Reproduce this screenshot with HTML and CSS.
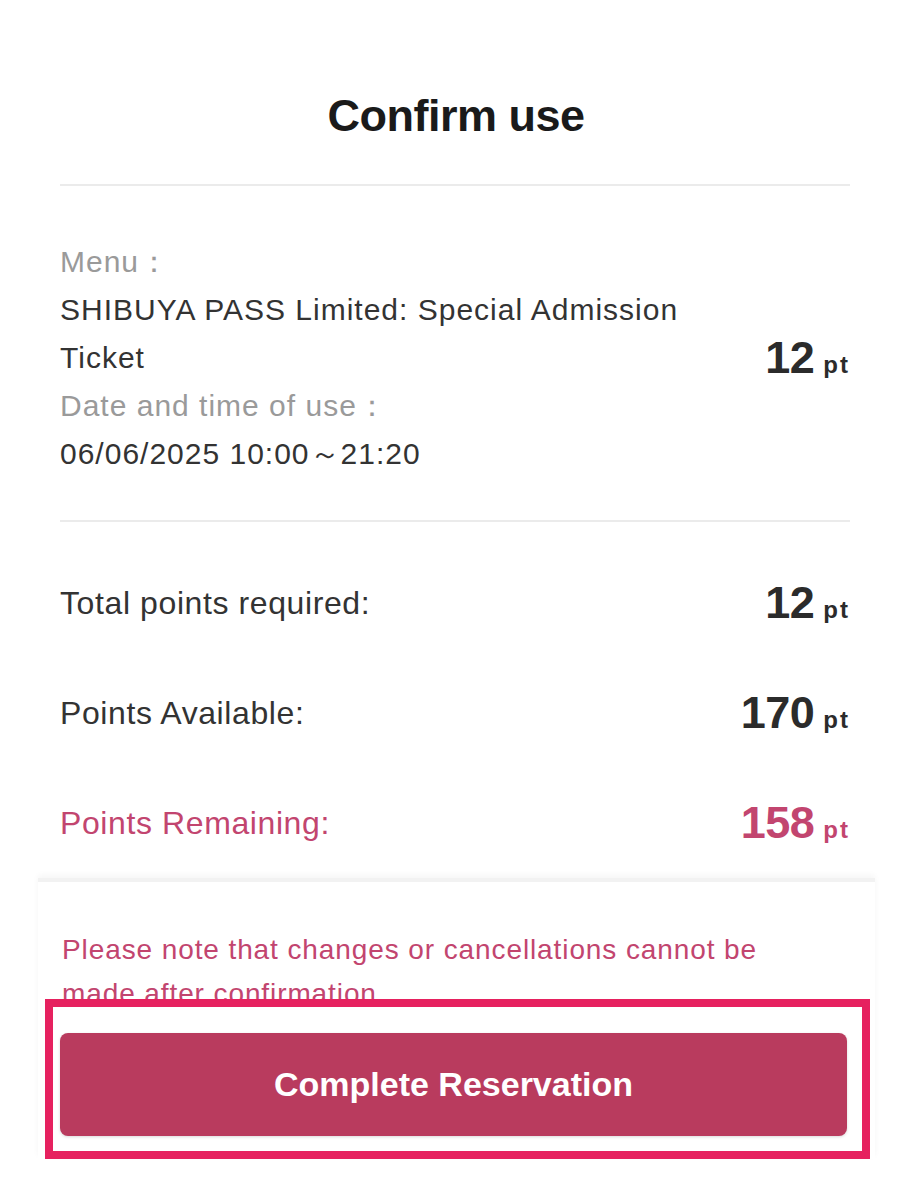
FILE: index.html
```html
<!DOCTYPE html>
<html lang="en">
<head>
    <meta charset="UTF-8">
    <meta name="viewport" content="width=device-width, initial-scale=1.0">
    <title>Confirm use</title>
    <link rel="stylesheet" href="styles.css">
</head>
<body>
    <div class="page">
        <h1 class="title">Confirm use</h1>

        <div class="content">
            <div class="item">
                <div class="item-info">
                    <div class="label">Menu：</div>
                    <div class="value">SHIBUYA PASS Limited: Special Admission Ticket</div>
                    <div class="label">Date and time of use：</div>
                    <div class="value">06/06/2025 10:00～21:20</div>
                </div>
                <div class="points"><span class="num">12</span><span class="unit">pt</span></div>
            </div>

            <div class="summary">
                <div class="row">
                    <span class="row-label">Total points required:</span>
                    <span class="points"><span class="num">12</span><span class="unit">pt</span></span>
                </div>
                <div class="row">
                    <span class="row-label">Points Available:</span>
                    <span class="points"><span class="num">170</span><span class="unit">pt</span></span>
                </div>
                <div class="row remaining">
                    <span class="row-label">Points Remaining:</span>
                    <span class="points"><span class="num">158</span><span class="unit">pt</span></span>
                </div>
            </div>
        </div>

        <div class="footer">
            <p class="note">Please note that changes or cancellations cannot be made after confirmation.</p>
            <div class="focus-box">
                <button class="btn-complete">Complete Reservation</button>
            </div>
        </div>
    </div>
</body>
</html>
```

FILE: styles.css
```css
* {
    box-sizing: border-box;
}
body {
    margin: 0;
    padding: 0;
    background: #fff;
    font-family: 'Liberation Sans', Arial, sans-serif;
    color: #333;
}
.page {
    width: 912px;
    min-height: 1200px;
    padding-top: 86px;
}
.title {
    margin: 0;
    font-size: 45px;
    font-weight: bold;
    text-align: center;
    color: #1a1a1a;
    line-height: 60px;
    letter-spacing: -0.5px;
}
.content {
    margin: 0 62px 0 60px;
}
.item {
    margin-top: 38px;
    border-top: 2px solid #ebebeb;
    border-bottom: 2px solid #ebebeb;
    padding: 52px 0 42px;
    display: flex;
    align-items: center;
    justify-content: space-between;
}
.item-info {
    width: 650px;
    font-size: 30px;
    line-height: 48px;
    letter-spacing: 1px;
}
.label {
    color: #9a9a9a;
}
.value {
    color: #333;
}
.points {
    display: flex;
    align-items: baseline;
    color: #2b2b2b;
    font-weight: bold;
}
.num {
    font-size: 45px;
    letter-spacing: -0.5px;
}
.unit {
    font-size: 24px;
    margin-left: 9px;
    letter-spacing: 2px;
}
.summary {
    padding-top: 26px;
}
.row {
    display: flex;
    justify-content: space-between;
    align-items: center;
    height: 110px;
}
.row-label {
    font-size: 32px;
    letter-spacing: 0.6px;
    color: #333;
}
.remaining .row-label,
.remaining .points {
    color: #c2456f;
}
.footer {
    margin: 0 37px 0 38px;
    padding: 46px 22px 0 24px;
    border-top: 4px solid #f2f2f2;
    box-shadow: 0 -3px 6px rgba(0, 0, 0, 0.04);
}
.note {
    margin: 0;
    max-width: 740px;
    font-size: 28px;
    line-height: 44px;
    letter-spacing: 0.9px;
    color: #c2456f;
}
.focus-box {
    position: relative;
    margin: -17px -17px 0 -17px;
    padding: 26px 15px 15px 7px;
    border: 8px solid #e6215f;
    background: #fff;
}
.btn-complete {
    display: block;
    width: 100%;
    height: 103px;
    border: none;
    border-radius: 8px;
    background: #b93b5e;
    color: #fff;
    font-family: 'Liberation Sans', Arial, sans-serif;
    font-size: 34px;
    font-weight: bold;
    box-shadow: 0 1px 3px rgba(0, 0, 0, 0.15);
}
```
